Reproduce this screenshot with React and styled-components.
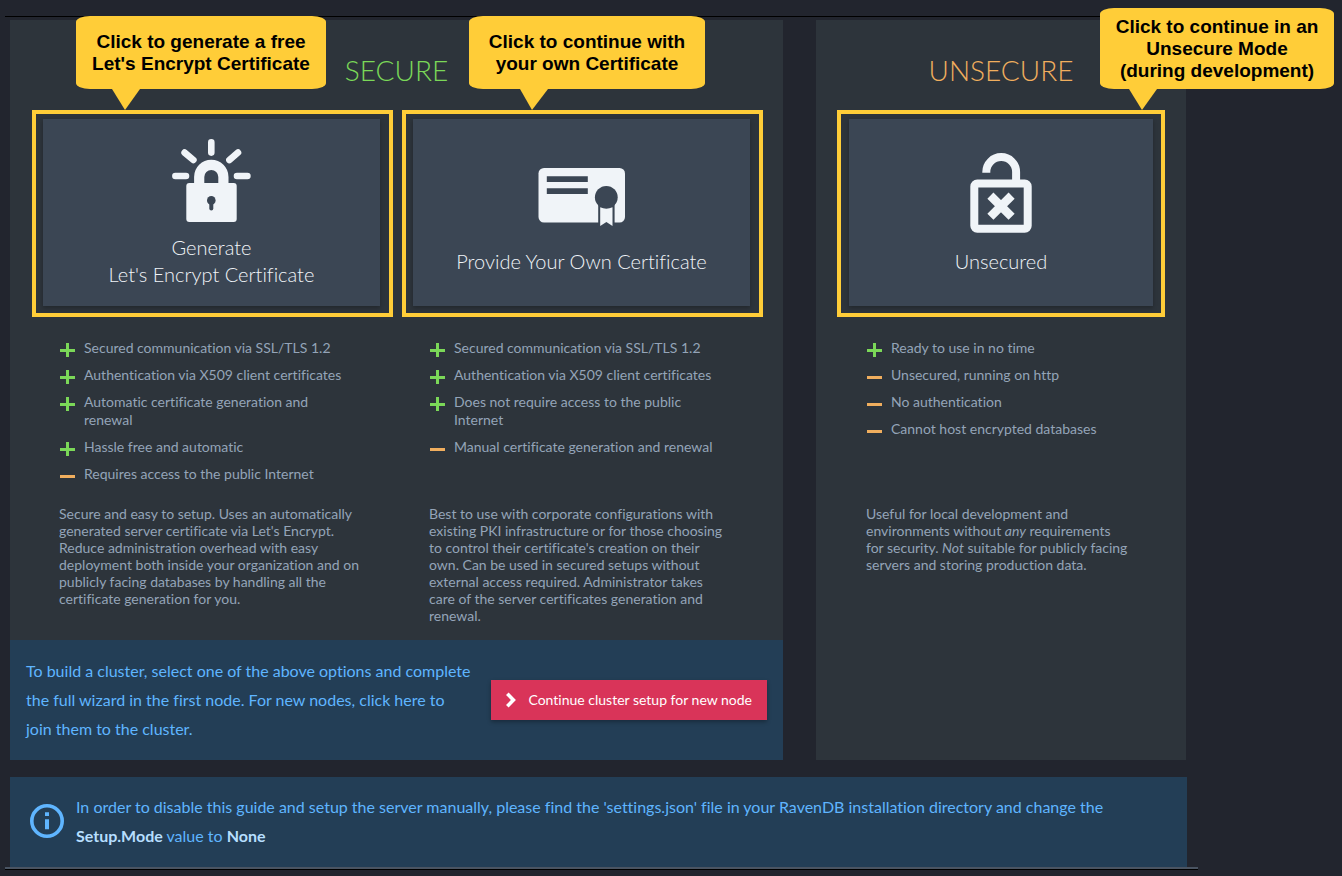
import React from "react";
import styled, { createGlobalStyle } from "styled-components";

const c = {
  page: "#22252e",
  panel: "#2d343b",
  tile: "#3b4654",
  tileText: "#f0f4f8",
  text: "#94a4b8",
  green: "#7bd858",
  orange: "#f0ae5e",
  yellow: "#ffcd38",
  info: "#233e56",
  infoText: "#5fb5ff",
  strong: "#b6dfff",
  red: "#d93459",
};

const GlobalStyle = createGlobalStyle`
  *, *::before, *::after { box-sizing: border-box; }
  body {
    margin: 0;
    background: ${c.page};
    color: ${c.text};
    font-family: Lato, "Liberation Sans", sans-serif;
    font-size: 14px;
    font-variant-ligatures: none;
  }
  button { font-variant-ligatures: none; }
`;

const Page = styled.main`
  margin: 16px 144px 0 5px;
  border-top: 1px solid #000;
  border-bottom: 1px solid #000;
`;

const Content = styled.div`
  display: flex;
  flex-direction: column;
  gap: 17px;
  padding: 3px 11px 0 5px;
  border-bottom: 2px solid #4a5462;
`;

const Panels = styled.div`
  display: grid;
  grid-template-columns: 773fr 370fr;
  gap: 33px;
  padding-right: 1px;
`;

const Panel = styled.section`
  display: flex;
  flex-direction: column;
  background: ${c.panel};
`;

const Heading = styled.h2`
  margin: 0;
  padding: 33px 0 23px;
  color: ${(p) => p.$color};
  font-size: 28px;
  font-weight: 300;
  line-height: 34px;
  text-align: center;
  text-transform: uppercase;
`;

const Options = styled.div`
  display: grid;
  grid-template-columns: repeat(${(p) => p.$columns}, minmax(0, 1fr));
  gap: 9px;
  padding: ${(p) => (p.$columns > 1 ? "0 20px 16px 22px" : "0 21px 16px")};
`;

const Option = styled.article`
  display: flex;
  flex-direction: column;
`;

const Highlight = styled.div`
  position: relative;
  display: flex;
  border: 4px solid ${c.yellow};
  padding: ${(p) => (p.$even ? "5px 8px 7px" : "5px 9px 7px 7px")};
`;

const Tile = styled.button`
  flex: 1;
  height: 187px;
  display: flex;
  flex-direction: column;
  align-items: center;
  justify-content: center;
  gap: 10px;
  border: 0;
  padding: 0 0 1px;
  background: ${c.tile};
  color: ${c.tileText};
  font-family: Lato, "Liberation Sans", sans-serif;
  font-size: 20px;
  font-weight: 300;
  line-height: 27px;
  box-shadow: 0 2px 4px rgba(0, 0, 0, 0.25);
  cursor: pointer;
`;

const TileIcon = styled.svg`
  width: 88px;
  height: 88px;
  flex: none;
`;

const Callout = styled.div`
  position: absolute;
  left: ${(p) => p.$left}px;
  bottom: 224px;
  width: ${(p) => p.$width}px;
  padding: ${(p) => (p.$tall ? "8px 0 7px" : "15px 0 14px")};
  border-radius: 14px / 6px;
  background: ${c.yellow};
  color: #000;
  font-family: "Liberation Sans", Arial, sans-serif;
  font-size: 19px;
  font-weight: bold;
  line-height: 22px;
  text-align: center;
  white-space: nowrap;
`;

const Tail = styled.svg`
  position: absolute;
  top: 100%;
  left: ${(p) => p.$left}px;
  width: 28px;
  height: 21px;
  fill: ${c.yellow};
`;

const Details = styled.div`
  padding: ${(p) => (p.$even ? "22px 35px 0 29px" : "22px 31px 0 27px")};
`;

const FeatureList = styled.ul`
  display: flex;
  flex-direction: column;
  gap: 9px;
  min-height: 144px;
  margin: 0 0 22px;
  padding: 0 8px 0 0;
  list-style: none;
  line-height: 18px;
`;

const Feature = styled.li`
  display: flex;
  align-items: flex-start;
  gap: 9px;
`;

const Mark = styled.svg`
  flex: none;
  width: 16px;
  height: 18px;
  fill: ${(p) => p.$color};
`;

const Description = styled.p`
  margin: 0;
  line-height: 17px;
`;

const ClusterBar = styled.div`
  display: flex;
  align-items: center;
  gap: 19px;
  padding: 16px 16px 17px;
  background: ${c.info};
  color: ${c.infoText};
`;

const InfoText = styled.p`
  flex: 1;
  margin: 0;
  font-size: 16px;
  line-height: 29px;

  strong { color: ${c.strong}; }
`;

const ClusterButton = styled.button`
  display: flex;
  align-items: center;
  gap: 12px;
  height: 40px;
  border: 0;
  padding: 0 15px;
  background: ${c.red};
  color: #fff;
  font-family: Lato, "Liberation Sans", sans-serif;
  font-size: 14px;
  line-height: 20px;
  box-shadow: 0 2px 4px rgba(0, 0, 0, 0.3);
  white-space: nowrap;
  cursor: pointer;
`;

const InfoBar = styled.aside`
  display: flex;
  align-items: center;
  gap: 12px;
  padding: 15px 20px 17px;
  background: ${c.info};
  color: ${c.infoText};
`;

function LockIcon() {
  return (
    <TileIcon viewBox="1 -1 88 88" aria-hidden="true">
      <g stroke={c.tileText} strokeWidth="6.6" strokeLinecap="round">
        <path d="M44.3 5.4V15.6M8.4 39H19M70 39H80.4M17.6 15.6 26.4 23M71 15.6 62.4 23" />
      </g>
      <path
        d="M32.2 48V40a12.1 12.1 0 0 1 24.2 0V48"
        fill="none"
        stroke={c.tileText}
        strokeWidth="10.2"
      />
      <rect x="19.3" y="46" width="50.4" height="39" rx="3" fill={c.tileText} />
      <circle cx="44.3" cy="63.4" r="4.3" fill={c.tile} />
      <path d="M44.3 64V71.6" stroke={c.tile} strokeWidth="4" strokeLinecap="round" />
    </TileIcon>
  );
}

function CertificateIcon() {
  return (
    <TileIcon viewBox="0 0 88 88" aria-hidden="true">
      <rect x="0.5" y="18" width="86.5" height="54.6" rx="5.5" fill={c.tileText} />
      <path d="M8.8 26.3h41v5.8h-41zM8.8 38.3h41v5.8h-41z" fill={c.tile} />
      <circle cx="68.3" cy="47.3" r="11.4" fill={c.tile} />
      <path d="M60.2 50h16.4v23H60.2z" fill={c.tile} />
      <path d="M62.2 57.3q6.1 2.8 12.3 0V76l-6.1-3.9L62.2 76z" fill={c.tileText} />
    </TileIcon>
  );
}

function UnlockIcon() {
  return (
    <TileIcon viewBox="0 0 88 88" aria-hidden="true">
      <g fill="none" stroke={c.tileText} strokeWidth="8">
        <rect x="17.3" y="33.4" width="53.4" height="45.3" rx="3" />
        <path d="M29.3 22.7V22a14.9 14.9 0 0 1 29.8 0V32" />
        <path d="M33.4 45.6 54.6 66.8M54.6 45.6 33.4 66.8" strokeWidth="8.6" />
      </g>
    </TileIcon>
  );
}

function FeatureMark({ plus }) {
  return (
    <Mark viewBox="0 0 16 18" $color={plus ? c.green : c.orange} role="img" aria-label={plus ? "Advantage" : "Drawback"}>
      <path d={plus ? "M1 10h6V4h3v6h6v3h-6v5H7v-5H1z" : "M1 10h15v3H1z"} />
    </Mark>
  );
}

function SetupOption({ icon, title, callout, even, features, children }) {
  return (
    <Option>
      <Highlight $even={even}>
        <Tile type="button">
          {icon}
          <span>{title}</span>
        </Tile>
        <Callout $left={callout.left} $width={callout.width} $tall={callout.lines.length > 2}>
          {callout.lines.map((line) => (
            <div key={line}>{line}</div>
          ))}
          <Tail $left={callout.tail} viewBox="0 0 28 21" aria-hidden="true">
            <path d={`M0 0H28L${callout.tip} 21z`} />
          </Tail>
        </Callout>
      </Highlight>
      <Details $even={even}>
        <FeatureList>
          {features.map(([plus, text]) => (
            <Feature key={text}>
              <FeatureMark plus={plus} />
              <span>{text}</span>
            </Feature>
          ))}
        </FeatureList>
        <Description>{children}</Description>
      </Details>
    </Option>
  );
}

export default function App() {
  return (
    <>
      <GlobalStyle />
      <Page>
        <Content>
          <Panels>
            <Panel>
              <Heading $color={c.green}>Secure</Heading>
              <Options $columns={2}>
                <SetupOption
                  icon={<LockIcon />}
                  title={<>Generate<br />Let's Encrypt Certificate</>}
                  callout={{
                    left: 40, width: 250, tail: 36, tip: 13,
                    lines: ["Click to generate a free", "Let's Encrypt Certificate"],
                  }}
                  features={[
                    [true, "Secured communication via SSL/TLS 1.2"],
                    [true, "Authentication via X509 client certificates"],
                    [true, "Automatic certificate generation and renewal"],
                    [true, "Hassle free and automatic"],
                    [false, "Requires access to the public Internet"],
                  ]}
                >
                  Secure and easy to setup. Uses an automatically generated server certificate via
                  Let's Encrypt. Reduce administration overhead with easy deployment both inside
                  your organization and on publicly facing databases by handling all the
                  certificate generation for you.
                </SetupOption>
                <SetupOption
                  icon={<CertificateIcon />}
                  title="Provide Your Own Certificate"
                  callout={{
                    left: 63, width: 236, tail: 51, tip: 12,
                    lines: ["Click to continue with", "your own Certificate"],
                  }}
                  features={[
                    [true, "Secured communication via SSL/TLS 1.2"],
                    [true, "Authentication via X509 client certificates"],
                    [true, "Does not require access to the public Internet"],
                    [false, "Manual certificate generation and renewal"],
                  ]}
                >
                  Best to use with corporate configurations with existing PKI infrastructure or for
                  those choosing to control their certificate's creation on their own. Can be used
                  in secured setups without external access required. Administrator takes care of
                  the server certificates generation and renewal.
                </SetupOption>
              </Options>
              <ClusterBar>
                <InfoText>
                  To build a cluster, select one of the above options and complete the full wizard
                  in the first node. For new nodes, click here to join them to the cluster.
                </InfoText>
                <ClusterButton type="button">
                  <svg width="10" height="16" viewBox="0 0 10 16" fill="none" stroke="#fff" strokeWidth="3.6" aria-hidden="true">
                    <path d="M1.3 1.8 7.4 8l-6.1 6.2" />
                  </svg>
                  Continue cluster setup for new node
                </ClusterButton>
              </ClusterBar>
            </Panel>
            <Panel>
              <Heading $color={c.orange}>Unsecure</Heading>
              <Options $columns={1}>
                <SetupOption
                  even
                  icon={<UnlockIcon />}
                  title="Unsecured"
                  callout={{
                    left: 259, width: 234, tail: 29, tip: 13,
                    lines: ["Click to continue in an", "Unsecure Mode", "(during development)"],
                  }}
                  features={[
                    [true, "Ready to use in no time"],
                    [false, "Unsecured, running on http"],
                    [false, "No authentication"],
                    [false, "Cannot host encrypted databases"],
                  ]}
                >
                  Useful for local development and environments without <em>any</em> requirements
                  for security. <em>Not</em> suitable for publicly facing servers and storing
                  production data.
                </SetupOption>
              </Options>
            </Panel>
          </Panels>
          <InfoBar>
            <svg width="34" height="34" viewBox="0 0 34 34" fill="none" stroke={c.infoText} strokeWidth="3.6" aria-hidden="true">
              <circle cx="17" cy="17" r="15.2" />
              <path d="M17 8.2v3.8M17 15.2v10" strokeWidth="4" />
            </svg>
            <InfoText>
              In order to disable this guide and setup the server manually, please find the
              'settings.json' file in your RavenDB installation directory and change the{" "}
              <strong>Setup.Mode</strong> value to <strong>None</strong>
            </InfoText>
          </InfoBar>
        </Content>
      </Page>
    </>
  );
}
